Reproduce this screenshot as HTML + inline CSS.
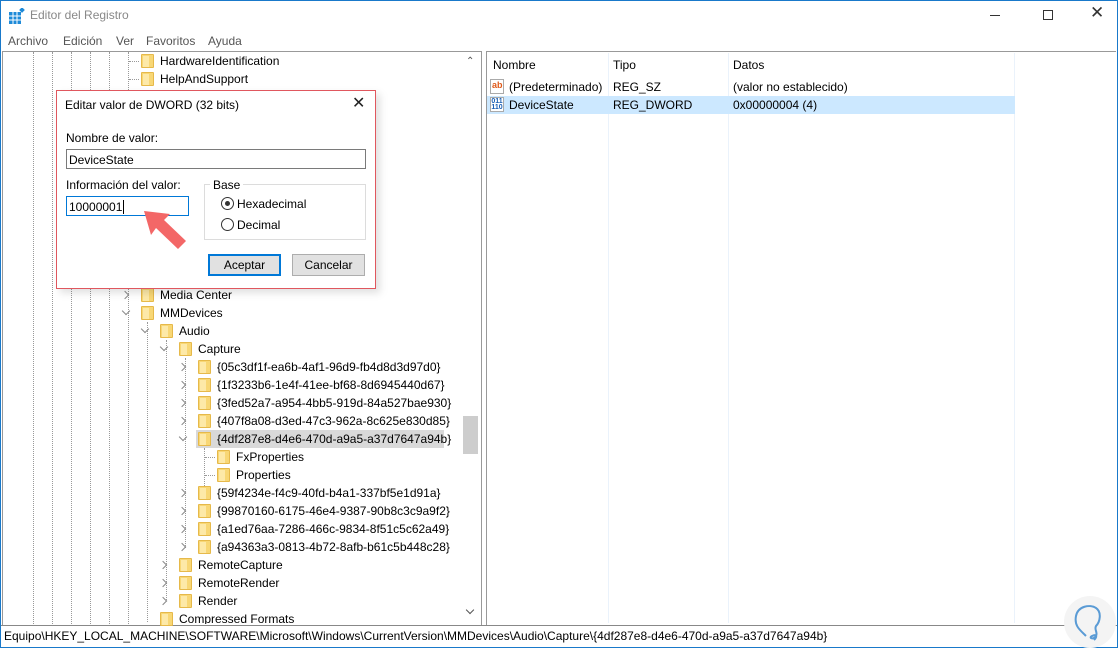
<!DOCTYPE html><html><head><style>
*{margin:0;padding:0;box-sizing:border-box}
body{width:1118px;height:648px;position:relative;background:#fff;font-family:"Liberation Sans",sans-serif;font-size:12px;color:#000;overflow:hidden}
.a{position:absolute;white-space:nowrap}
.fold{position:absolute;width:13px;height:14px;background:#f8d775;border:1px solid #e6b94a;border-radius:1px}
.fold:after{content:"";position:absolute;left:1px;top:1px;width:6px;height:11px;background:#fde9a8}
.vl{position:absolute;border-left:1px dotted #999;width:0}
.hl{position:absolute;border-top:1px dotted #999;height:0}
.chev{position:absolute;width:6px;height:6px;border-right:1.3px solid #888;border-bottom:1.3px solid #888}
.r{transform:rotate(-45deg)}.d{transform:rotate(45deg)}
.t{position:absolute;font-size:12px;line-height:18px;white-space:nowrap}
</style></head><body>
<div class="a" style="left:0;top:0;width:1118px;height:648px;border:1px solid #1979ca"></div>
<!-- title -->
<svg class="a" style="left:9;top:8px;left:9px" width="16" height="16"><rect x="0" y="4" width="12" height="12" fill="#1e8ad8"/><path d="M0 8h12M0 12h12M4 4v12M8 4v12" stroke="#fff" stroke-width="1"/><rect x="11" y="0" width="4" height="4" fill="#1e8ad8" transform="rotate(45 13 2)"/></svg>
<div class="a" style="left:30px;top:8px;font-size:12px;color:#888">Editor del Registro</div>
<div class="a" style="left:990px;top:15px;width:10px;border-top:1px solid #333"></div>
<div class="a" style="left:1043px;top:10px;width:10px;height:10px;border:1px solid #333"></div>
<div class="a" style="left:1090px;top:3px;font-size:17px;color:#333">✕</div>
<div class="a" style="left:8px;top:34px;color:#555">Archivo</div>
<div class="a" style="left:63px;top:34px;color:#555">Edición</div>
<div class="a" style="left:116px;top:34px;color:#555">Ver</div>
<div class="a" style="left:146px;top:34px;color:#555">Favoritos</div>
<div class="a" style="left:208px;top:34px;color:#555">Ayuda</div>
<!-- left pane -->
<div class="a" style="left:2px;top:51px;width:480px;height:574px;border:1px solid #999;border-bottom:none"></div>
<div class="a" style="left:486px;top:51px;width:630px;height:574px;border-left:1px solid #999;border-top:1px solid #999"></div>
<div class="a" style="left:1px;top:625px;width:1116px;border-top:1px solid #888"></div>
<div class="a" style="left:4px;top:629px;font-size:12px">Equipo\HKEY_LOCAL_MACHINE\SOFTWARE\Microsoft\Windows\CurrentVersion\MMDevices\Audio\Capture\{4df287e8-d4e6-470d-a9a5-a37d7647a94b}</div>
<!-- scrollbar -->
<div class="a" style="left:463px;top:416px;width:15px;height:38px;background:#cdcdcd"></div>
<div class="a" style="left:466px;top:56px;color:#555;font-size:10px">⌃</div>
<div class="chev d" style="left:467px;top:607px;border-color:#555"></div>
<!-- dotted vertical lines -->
<div class="vl" style="left:33px;top:52px;height:572px"></div>
<div class="vl" style="left:52px;top:52px;height:572px"></div>
<div class="vl" style="left:71px;top:52px;height:572px"></div>
<div class="vl" style="left:90px;top:52px;height:572px"></div>
<div class="vl" style="left:109px;top:52px;height:572px"></div>
<div class="vl" style="left:128px;top:52px;height:572px"></div>
<div class="vl" style="left:147px;top:322px;height:300px"></div>
<div class="vl" style="left:166px;top:340px;height:260px"></div>
<div class="vl" style="left:185px;top:358px;height:190px"></div>
<div class="vl" style="left:204px;top:448px;height:44px"></div>
<div class="hl" style="left:129px;top:61px;width:10px"></div>
<div class="hl" style="left:129px;top:79px;width:10px"></div>
<!-- tree rows -->
<div class="fold" style="left:141px;top:54px"></div><div class="t" style="left:160px;top:52px">HardwareIdentification</div>
<div class="fold" style="left:141px;top:72px"></div><div class="t" style="left:160px;top:70px">HelpAndSupport</div>
<div class="chev r" style="left:122px;top:292px"></div><div class="fold" style="left:141px;top:288px"></div><div class="t" style="left:160px;top:286px">Media Center</div>
<div class="chev d" style="left:123px;top:308px"></div><div class="fold" style="left:141px;top:306px"></div><div class="t" style="left:160px;top:304px">MMDevices</div>
<div class="chev d" style="left:142px;top:326px"></div><div class="fold" style="left:160px;top:324px"></div><div class="t" style="left:179px;top:322px">Audio</div>
<div class="chev d" style="left:161px;top:344px"></div><div class="fold" style="left:179px;top:342px"></div><div class="t" style="left:198px;top:340px">Capture</div>
<div class="a" style="left:196px;top:430px;width:248px;height:18px;background:#d9d9d9"></div>
<div class="chev r" style="left:179px;top:364px"></div><div class="fold" style="left:198px;top:360px"></div><div class="t" style="left:217px;top:358px">{05c3df1f-ea6b-4af1-96d9-fb4d8d3d97d0}</div>
<div class="chev r" style="left:179px;top:382px"></div><div class="fold" style="left:198px;top:378px"></div><div class="t" style="left:217px;top:376px">{1f3233b6-1e4f-41ee-bf68-8d6945440d67}</div>
<div class="chev r" style="left:179px;top:400px"></div><div class="fold" style="left:198px;top:396px"></div><div class="t" style="left:217px;top:394px">{3fed52a7-a954-4bb5-919d-84a527bae930}</div>
<div class="chev r" style="left:179px;top:418px"></div><div class="fold" style="left:198px;top:414px"></div><div class="t" style="left:217px;top:412px">{407f8a08-d3ed-47c3-962a-8c625e830d85}</div>
<div class="chev d" style="left:180px;top:434px"></div><div class="fold" style="left:198px;top:432px"></div><div class="t" style="left:217px;top:430px">{4df287e8-d4e6-470d-a9a5-a37d7647a94b}</div>
<div class="hl" style="left:205px;top:457px;width:10px"></div><div class="hl" style="left:205px;top:475px;width:10px"></div>
<div class="fold" style="left:217px;top:450px"></div><div class="t" style="left:236px;top:448px">FxProperties</div>
<div class="fold" style="left:217px;top:468px"></div><div class="t" style="left:236px;top:466px">Properties</div>
<div class="chev r" style="left:179px;top:490px"></div><div class="fold" style="left:198px;top:486px"></div><div class="t" style="left:217px;top:484px">{59f4234e-f4c9-40fd-b4a1-337bf5e1d91a}</div>
<div class="chev r" style="left:179px;top:508px"></div><div class="fold" style="left:198px;top:504px"></div><div class="t" style="left:217px;top:502px">{99870160-6175-46e4-9387-90b8c3c9a9f2}</div>
<div class="chev r" style="left:179px;top:526px"></div><div class="fold" style="left:198px;top:522px"></div><div class="t" style="left:217px;top:520px">{a1ed76aa-7286-466c-9834-8f51c5c62a49}</div>
<div class="chev r" style="left:179px;top:544px"></div><div class="fold" style="left:198px;top:540px"></div><div class="t" style="left:217px;top:538px">{a94363a3-0813-4b72-8afb-b61c5b448c28}</div>
<div class="chev r" style="left:160px;top:562px"></div><div class="fold" style="left:179px;top:558px"></div><div class="t" style="left:198px;top:556px">RemoteCapture</div>
<div class="chev r" style="left:160px;top:580px"></div><div class="fold" style="left:179px;top:576px"></div><div class="t" style="left:198px;top:574px">RemoteRender</div>
<div class="chev r" style="left:160px;top:598px"></div><div class="fold" style="left:179px;top:594px"></div><div class="t" style="left:198px;top:592px">Render</div>
<div class="fold" style="left:160px;top:612px"></div><div class="t" style="left:179px;top:610px;height:14px;overflow:hidden">Compressed Formats</div>
<!-- right pane -->
<div class="a" style="left:608px;top:53px;height:570px;border-left:1px solid #eaf2fb"></div>
<div class="a" style="left:728px;top:53px;height:570px;border-left:1px solid #eaf2fb"></div>
<div class="a" style="left:1014px;top:53px;height:570px;border-left:1px solid #eaf2fb"></div>
<div class="t" style="left:493px;top:56px">Nombre</div><div class="t" style="left:613px;top:56px">Tipo</div><div class="t" style="left:733px;top:56px">Datos</div>
<div class="a" style="left:490px;top:79px;width:14px;height:15px;border:1px solid #aaa;background:#fff;color:#e05a1a;font-size:9px;font-weight:bold;line-height:10px;padding-left:1px">ab</div>
<div class="t" style="left:509px;top:78px">(Predeterminado)</div><div class="t" style="left:613px;top:78px">REG_SZ</div><div class="t" style="left:733px;top:78px">(valor no establecido)</div>
<div class="a" style="left:487px;top:96px;width:528px;height:18px;background:#cce8ff"></div>
<div class="a" style="left:490px;top:97px;width:14px;height:15px;border:1px solid #aaa;background:#fff;color:#1a5fb4;font-size:7px;font-weight:bold;line-height:6px;text-align:center;padding-top:1px">011<br>110</div>
<div class="t" style="left:509px;top:96px">DeviceState</div><div class="t" style="left:613px;top:96px">REG_DWORD</div><div class="t" style="left:733px;top:96px">0x00000004 (4)</div>
<!-- watermark -->
<div class="a" style="left:1064px;top:596px;width:52px;height:52px;border-radius:50%;background:#f4f4f4"></div>
<svg class="a" style="left:1072px;top:598px" width="40" height="48"><path d="M14 38c-6-6-12-10-10-20 2-10 14-12 20-8 6 4 4 14 0 18-2 4 2 6 0 10-2 4-8 2-4 0 4-2 6 0 2 4" fill="none" stroke="#5a9bd5" stroke-width="2"/></svg>
<!-- dialog -->
<div class="a" style="left:60px;top:94px;width:320px;height:199px;background:rgba(0,0,0,.12);filter:blur(4px)"></div>
<div class="a" style="left:56px;top:90px;width:320px;height:199px;background:#fff;border:1px solid #e0575e"></div>
<div class="a" style="left:65px;top:98px">Editar valor de DWORD (32 bits)</div>
<div class="a" style="left:352px;top:93px;font-size:16px;color:#222">✕</div>
<div class="a" style="left:66px;top:131px">Nombre de valor:</div>
<div class="a" style="left:66px;top:149px;width:300px;height:20px;border:1px solid #7a7a7a;padding:3px 2px">DeviceState</div>
<div class="a" style="left:66px;top:178px">Información del valor:</div>
<div class="a" style="left:66px;top:196px;width:123px;height:20px;border:1px solid #0078d7;padding:3px 2px">10000001<span style="border-left:1px solid #000;margin-left:1px"></span></div>
<div class="a" style="left:204px;top:184px;width:162px;height:56px;border:1px solid #dcdcdc"></div>
<div class="a" style="left:210px;top:178px;background:#fff;padding:0 3px">Base</div>
<div class="a" style="left:221px;top:197px;width:13px;height:13px;border:1px solid #333;border-radius:50%"></div>
<div class="a" style="left:225px;top:201px;width:5px;height:5px;background:#333;border-radius:50%"></div>
<div class="a" style="left:237px;top:197px">Hexadecimal</div>
<div class="a" style="left:221px;top:218px;width:13px;height:13px;border:1px solid #333;border-radius:50%"></div>
<div class="a" style="left:237px;top:218px">Decimal</div>
<div class="a" style="left:208px;top:254px;width:73px;height:22px;border:2px solid #0078d7;background:#e1e1e1;text-align:center;line-height:18px">Aceptar</div>
<div class="a" style="left:292px;top:254px;width:73px;height:22px;border:1px solid #adadad;background:#e1e1e1;text-align:center;line-height:20px">Cancelar</div>
<svg class="a" style="left:138px;top:205px" width="52" height="50"><path d="M6 6L32 9 26 15 48 36 40 44 18 23 13 30Z" fill="#f36767"/></svg>
</body></html>
